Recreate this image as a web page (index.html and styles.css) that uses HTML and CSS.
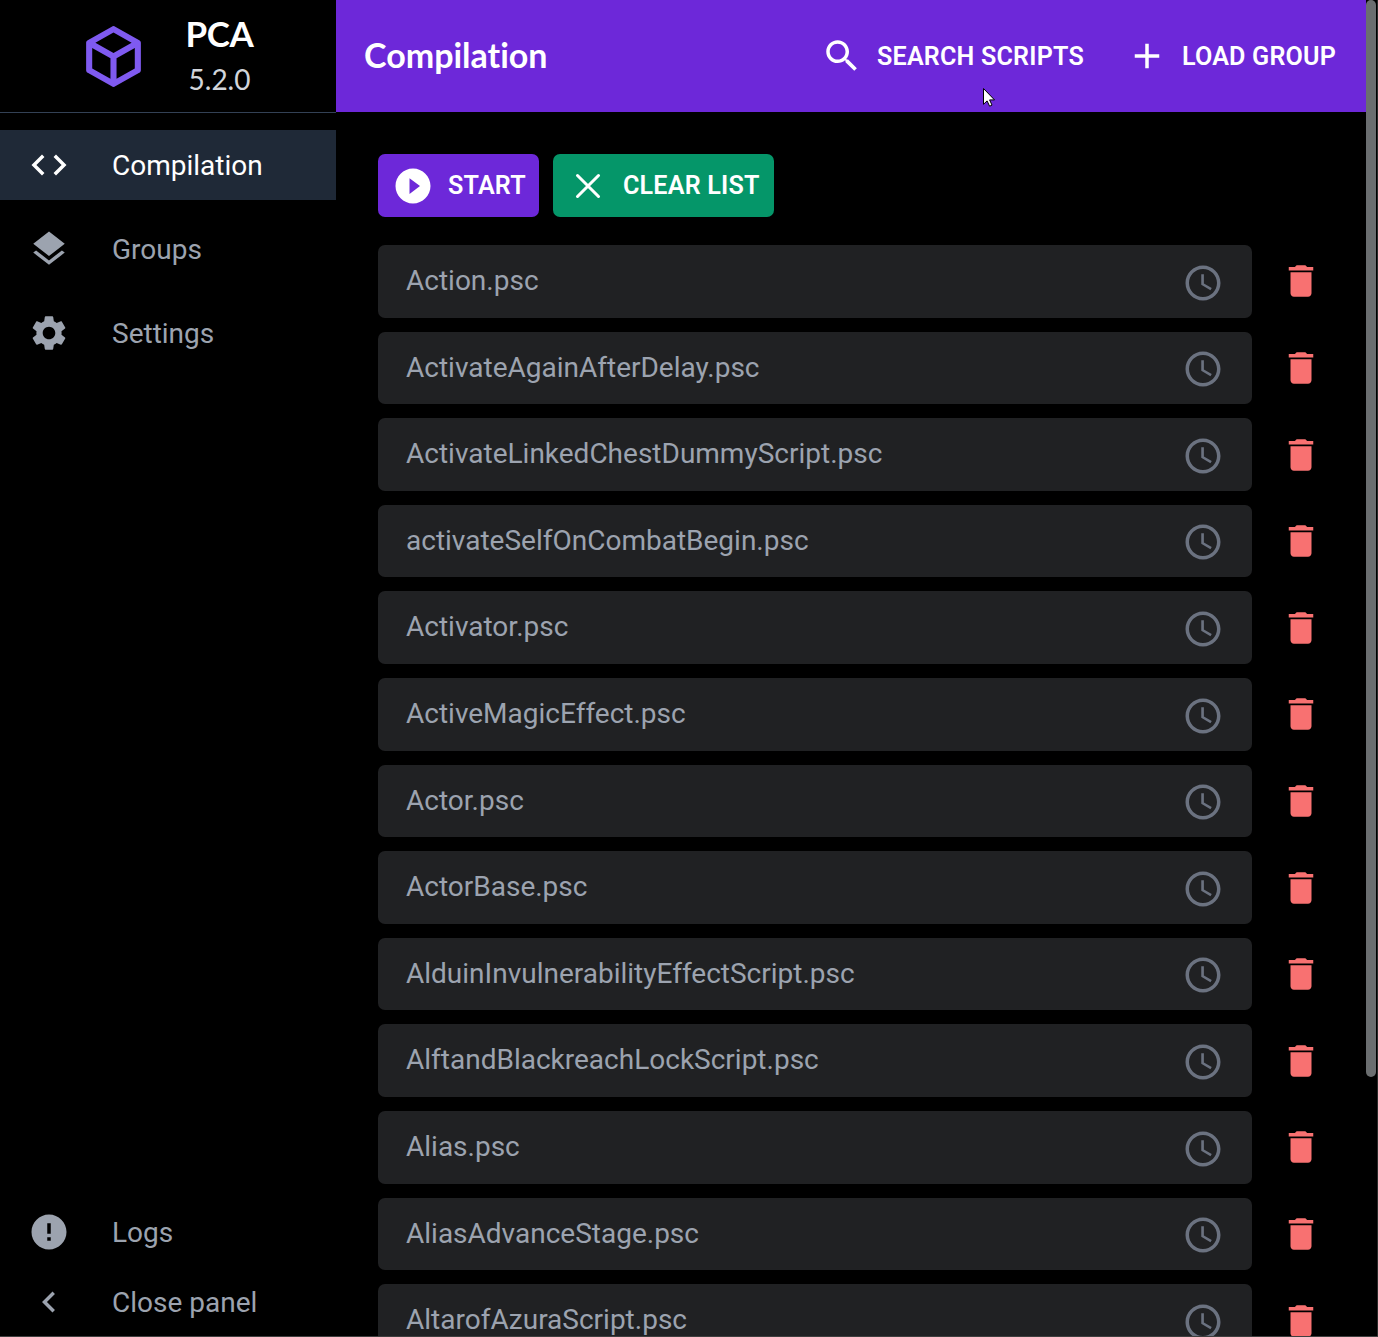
FILE: index.html
```
<!DOCTYPE html>
<html lang="en">
<head>
<meta charset="utf-8">
<title>PCA</title>
<link rel="stylesheet" href="styles.css">
</head>
<body>
<svg class="sprite" aria-hidden="true">
  <symbol id="clock" viewBox="0 0 24 24"><path d="M11.99 2C6.47 2 2 6.48 2 12s4.47 10 9.99 10C17.52 22 22 17.52 22 12S17.52 2 11.99 2zM12 20c-4.42 0-8-3.58-8-8s3.58-8 8-8 8 3.58 8 8-3.58 8-8 8z"/><path d="M12.5 7H11v6l5.25 3.15.75-1.23-4.5-2.67z"/></symbol>
  <symbol id="trash" viewBox="0 0 24 24"><path d="M6 19c0 1.1.9 2 2 2h8c1.1 0 2-.9 2-2V7H6v12zM19 4h-3.5l-1-1h-5l-1 1H5v2h14V4z"/></symbol>
</svg>
<div class="app">
  <aside class="sidebar">
    <div class="brand">
      <svg class="logo" viewBox="0 0 24 24"><path d="M21,16.5C21,16.88 20.79,17.21 20.47,17.38L12.57,21.82C12.41,21.94 12.21,22 12,22C11.79,22 11.59,21.94 11.43,21.82L3.53,17.38C3.21,17.21 3,16.88 3,16.5V7.5C3,7.12 3.21,6.79 3.53,6.62L11.43,2.18C11.59,2.06 11.79,2 12,2C12.21,2 12.41,2.06 12.57,2.18L20.47,6.62C20.79,6.79 21,7.12 21,7.5V16.5M12,4.15L6.04,7.5L12,10.85L17.96,7.5L12,4.15M5,15.91L11,19.29V12.58L5,9.21V15.91M19,15.91V9.21L13,12.58V19.29L19,15.91Z"/></svg>
      <div class="brand-text">
        <span class="brand-name">PCA</span>
        <span class="brand-version">5.2.0</span>
      </div>
    </div>
    <nav class="nav">
      <a class="nav-item active"><svg class="icon" viewBox="0 0 24 24"><path d="M9.4 16.6 4.8 12l4.6-4.6L8 6l-6 6 6 6 1.4-1.4zm5.2 0 4.6-4.6-4.6-4.6L16 6l6 6-6 6-1.4-1.4z"/></svg><span>Compilation</span></a>
      <a class="nav-item"><svg class="icon" viewBox="0 0 24 24"><path d="m11.99 18.54-7.37-5.73L3 14.07l9 7 9-7-1.63-1.27-7.38 5.74zM12 16l7.36-5.73L21 9l-9-7-9 7 1.63 1.27L12 16z"/></svg><span>Groups</span></a>
      <a class="nav-item"><svg class="icon" viewBox="0 0 24 24"><path d="M19.14 12.94c.04-.3.06-.61.06-.94 0-.32-.02-.64-.07-.94l2.03-1.58c.18-.14.23-.41.12-.61l-1.92-3.32c-.12-.22-.37-.29-.59-.22l-2.39.96c-.5-.38-1.03-.7-1.62-.94l-.36-2.54c-.04-.24-.24-.41-.48-.41h-3.84c-.24 0-.43.17-.47.41l-.36 2.54c-.59.24-1.13.57-1.62.94l-2.39-.96c-.22-.08-.47 0-.59.22L2.74 8.87c-.12.21-.08.47.12.61l2.03 1.58c-.05.3-.09.63-.09.94s.02.64.07.94l-2.03 1.58c-.18.14-.23.41-.12.61l1.92 3.32c.12.22.37.29.59.22l2.39-.96c.5.38 1.03.7 1.62.94l.36 2.54c.05.24.24.41.48.41h3.84c.24 0 .44-.17.47-.41l.36-2.54c.59-.24 1.13-.56 1.62-.94l2.39.96c.22.08.47 0 .59-.22l1.92-3.32c.12-.22.07-.47-.12-.61l-2.01-1.58zM12 15.6c-1.98 0-3.6-1.62-3.6-3.6s1.62-3.6 3.6-3.6 3.6 1.62 3.6 3.6-1.62 3.6-3.6 3.6z"/></svg><span>Settings</span></a>
    </nav>
    <div class="nav-bottom">
      <a class="nav-item"><svg class="icon" viewBox="0 0 24 24"><path d="M12 2C6.48 2 2 6.48 2 12s4.48 10 10 10 10-4.48 10-10S17.52 2 12 2zm1 15h-2v-2h2v2zm0-4h-2V7h2v6z"/></svg><span>Logs</span></a>
      <a class="nav-item"><svg class="icon" viewBox="0 0 24 24"><path d="M15.41 7.41 14 6l-6 6 6 6 1.41-1.41L10.83 12z"/></svg><span>Close panel</span></a>
    </div>
  </aside>
  <main class="main">
    <header class="topbar">
      <h1 class="title">Compilation</h1>
      <div class="actions">
        <button class="action"><svg class="icon" viewBox="0 0 24 24"><path d="M15.5 14h-.79l-.28-.27C15.41 12.59 16 11.11 16 9.5 16 5.91 13.09 3 9.5 3S3 5.91 3 9.5 5.91 16 9.5 16c1.61 0 3.09-.59 4.23-1.57l.27.28v.79l5 4.99L20.49 19l-4.99-5zm-6 0C7.01 14 5 11.99 5 9.5S7.01 5 9.5 5 14 7.01 14 9.5 11.99 14 9.5 14z"/></svg><span>SEARCH SCRIPTS</span></button>
        <button class="action"><svg class="icon" viewBox="0 0 24 24"><path d="M19 13h-6v6h-2v-6H5v-2h6V5h2v6h6v2z"/></svg><span>LOAD GROUP</span></button>
      </div>
    </header>
    <div class="content">
      <div class="toolbar">
        <button class="btn btn-start"><svg class="icon" viewBox="0 0 24 24"><path d="M12 2C6.48 2 2 6.48 2 12s4.48 10 10 10 10-4.48 10-10S17.52 2 12 2zm-2 14.5v-9l6 4.5-6 4.5z"/></svg><span>START</span></button>
        <button class="btn btn-clear"><svg class="icon icon-close" viewBox="0 0 24 24"><path d="M6 6l12 12M18 6L6 18"/></svg><span>CLEAR LIST</span></button>
      </div>
      <ul class="scripts">
        <li class="row"><div class="script"><span>Action.psc</span><svg class="icon"><use href="#clock"/></svg></div><svg class="icon delete"><use href="#trash"/></svg></li>
        <li class="row"><div class="script"><span>ActivateAgainAfterDelay.psc</span><svg class="icon"><use href="#clock"/></svg></div><svg class="icon delete"><use href="#trash"/></svg></li>
        <li class="row"><div class="script"><span>ActivateLinkedChestDummyScript.psc</span><svg class="icon"><use href="#clock"/></svg></div><svg class="icon delete"><use href="#trash"/></svg></li>
        <li class="row"><div class="script"><span>activateSelfOnCombatBegin.psc</span><svg class="icon"><use href="#clock"/></svg></div><svg class="icon delete"><use href="#trash"/></svg></li>
        <li class="row"><div class="script"><span>Activator.psc</span><svg class="icon"><use href="#clock"/></svg></div><svg class="icon delete"><use href="#trash"/></svg></li>
        <li class="row"><div class="script"><span>ActiveMagicEffect.psc</span><svg class="icon"><use href="#clock"/></svg></div><svg class="icon delete"><use href="#trash"/></svg></li>
        <li class="row"><div class="script"><span>Actor.psc</span><svg class="icon"><use href="#clock"/></svg></div><svg class="icon delete"><use href="#trash"/></svg></li>
        <li class="row"><div class="script"><span>ActorBase.psc</span><svg class="icon"><use href="#clock"/></svg></div><svg class="icon delete"><use href="#trash"/></svg></li>
        <li class="row"><div class="script"><span>AlduinInvulnerabilityEffectScript.psc</span><svg class="icon"><use href="#clock"/></svg></div><svg class="icon delete"><use href="#trash"/></svg></li>
        <li class="row"><div class="script"><span>AlftandBlackreachLockScript.psc</span><svg class="icon"><use href="#clock"/></svg></div><svg class="icon delete"><use href="#trash"/></svg></li>
        <li class="row"><div class="script"><span>Alias.psc</span><svg class="icon"><use href="#clock"/></svg></div><svg class="icon delete"><use href="#trash"/></svg></li>
        <li class="row"><div class="script"><span>AliasAdvanceStage.psc</span><svg class="icon"><use href="#clock"/></svg></div><svg class="icon delete"><use href="#trash"/></svg></li>
        <li class="row"><div class="script"><span>AltarofAzuraScript.psc</span><svg class="icon"><use href="#clock"/></svg></div><svg class="icon delete"><use href="#trash"/></svg></li>
      </ul>
    </div>
  </main>
  <div class="scrollbar"><div class="thumb"></div></div>
</div>
<svg class="cursor" viewBox="0 0 12 19"><path d="M.5.5v15.8l3.6-3.4 2.5 5.3 2.4-1.1-2.4-5.2h4.9z"/></svg>
</body>
</html>
```
FILE: styles.css
```
* { box-sizing: border-box; }

body {
  margin: 0;
  background: #000;
  color: #9ca3af;
  font: 28px/42px Roboto, sans-serif;
  overflow: hidden;
}

.sprite { display: none; }

.app {
  display: flex;
  height: 1337px;
  overflow: hidden;
  border-bottom: 1px solid #3f3f3f;
}

.icon {
  width: 42px;
  height: 42px;
  flex: none;
  fill: currentColor;
}

.icon-close {
  fill: none;
  stroke: currentColor;
  stroke-width: 1.75;
  stroke-linecap: round;
}

/* Sidebar */
.sidebar {
  width: 336px;
  flex: none;
  display: flex;
  flex-direction: column;
}

.brand {
  height: 113px;
  flex: none;
  display: flex;
  border-bottom: 1px solid #334155;
  padding: 0 0 0 77px;
}

.logo {
  width: 73px;
  height: 73px;
  margin-top: 19.5px;
  fill: #7f5af0;
}

.brand-text {
  width: 139px;
  display: flex;
  flex-direction: column;
  align-items: center;
  padding-top: 12px;
  font-family: Lato, sans-serif;
}

.brand-name {
  color: #fff;
  font-size: 35px;
  font-weight: 700;
  letter-spacing: -0.4px;
}

.brand-version {
  color: #d1d5db;
  font-size: 28px;
  line-height: 50px;
}

.nav {
  display: flex;
  flex-direction: column;
  gap: 14px;
  padding-top: 17px;
}

.nav-bottom {
  margin-top: auto;
  margin-bottom: -1px;
}

.nav-item {
  height: 70px;
  display: flex;
  align-items: center;
  gap: 42px;
  padding-left: 28px;
}

.nav-item span { padding-top: 2px; }

.nav-item.active {
  background: #1f2937;
  color: #fff;
}

/* Main panel */
.main {
  flex: 1;
  min-width: 0;
}

.topbar {
  height: 112px;
  display: flex;
  align-items: center;
  justify-content: space-between;
  padding: 0 30px 0 28px;
  background: #6d28d9;
  color: #fff;
}

.title {
  margin: 0 0 3px;
  font: 700 34px/42px Lato, sans-serif;
  font-variant-ligatures: none;
}

.actions {
  display: flex;
  gap: 42px;
}

.action,
.btn {
  display: flex;
  align-items: center;
  gap: 14px;
  border: 0;
  padding: 0;
  background: none;
  color: #fff;
  font: 600 25.1px/42px Roboto, sans-serif;
  letter-spacing: 0.2px;
  white-space: nowrap;
}

.action span { padding-top: 2px; }

.content { padding: 42px 44px 0 42px; }

.toolbar {
  display: flex;
  gap: 14px;
}

.btn {
  height: 63px;
  padding: 0 14px;
  border-radius: 7px;
}

.btn-start {
  width: 161px;
  background: #6d28d9;
}

.btn-clear {
  width: 221px;
  background: #059669;
}

.btn span { padding-top: 1px; }

.scripts {
  list-style: none;
  margin: 28px 0 0;
  padding: 0;
  display: flex;
  flex-direction: column;
  gap: 14px;
}

.row {
  display: flex;
  align-items: center;
  gap: 28px;
}

.script {
  width: 874px;
  height: 72.6px;
  display: flex;
  align-items: center;
  justify-content: space-between;
  padding: 0 28px;
  border-radius: 7px;
  background: #202123;
}

.script span { padding-bottom: 0.5px; }

.script .icon {
  color: #6b7280;
  margin-top: 2.7px;
}

.delete {
  color: #f87171;
  margin-top: 0.3px;
}

/* Window scrollbar */
.scrollbar {
  width: 12px;
  flex: none;
  border-right: 1px solid #2b2b2b;
}

.thumb {
  width: 10px;
  height: 1077px;
  border-radius: 5px;
  background: #6b6e70;
}

.cursor {
  position: absolute;
  left: 983px;
  top: 88px;
  width: 12px;
  height: 19px;
  fill: #fff;
  stroke: #000;
}
```
